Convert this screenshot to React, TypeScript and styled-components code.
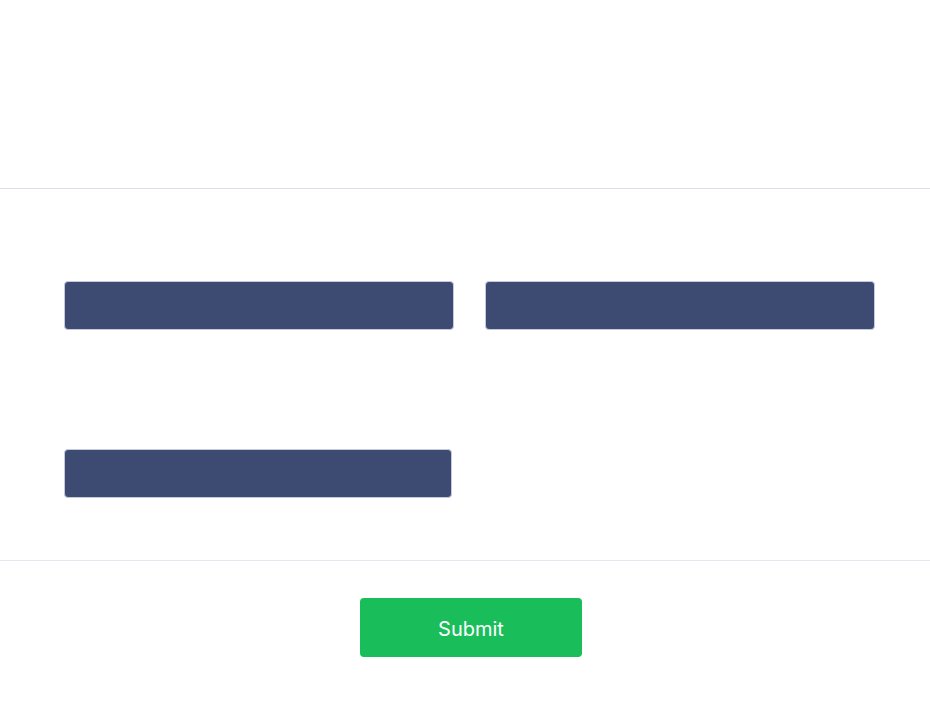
import React from "react";
import styled, { createGlobalStyle } from "styled-components";

const Global = createGlobalStyle`
  html, body { margin: 0; padding: 0; background: #ffffff; }
  body { font-family: Inter, "Noto Sans", sans-serif; }
`;

const Header = styled.div`
  height: 188px;
  border-bottom: 1px solid #dcdcee;
`;

const Body = styled.div`
  padding: 92px 55px 0 64px;
  display: flex;
  flex-direction: column;
  gap: 119px;
  height: 279px;
  border-bottom: 1px solid #e6e6ef;
`;

const Row = styled.div`
  display: grid;
  grid-template-columns: 390px 390px;
  column-gap: 31px;
`;

const Field = styled.input<{ $w?: number }>`
  box-sizing: border-box;
  height: 49px;
  width: ${(p) => (p.$w ? `${p.$w}px` : "100%")};
  background: #3d4a72;
  border: 1px solid #c5c9dc;
  border-radius: 4px;
  outline: none;
  padding: 0 12px;
  color: #ffffff;
  font-family: Inter, sans-serif;
  font-size: 15px;
`;

const Footer = styled.div`
  display: flex;
  justify-content: center;
  padding: 37px 0 0 12px;
`;

const Button = styled.button`
  width: 222px;
  height: 59px;
  padding: 2px 0 0 0;
  background: #19be5b;
  border: none;
  border-radius: 4px;
  color: #ffffff;
  font-family: Inter, sans-serif;
  font-size: 20px;
  font-weight: 400;
  cursor: pointer;
`;

export default function App() {
  return (
    <>
      <Global />
      <Header />
      <Body>
        <Row>
          <Field aria-label="field 1" />
          <Field aria-label="field 2" />
        </Row>
        <Row>
          <Field aria-label="field 3" $w={388} />
        </Row>
      </Body>
      <Footer>
        <Button>Submit</Button>
      </Footer>
    </>
  );
}
